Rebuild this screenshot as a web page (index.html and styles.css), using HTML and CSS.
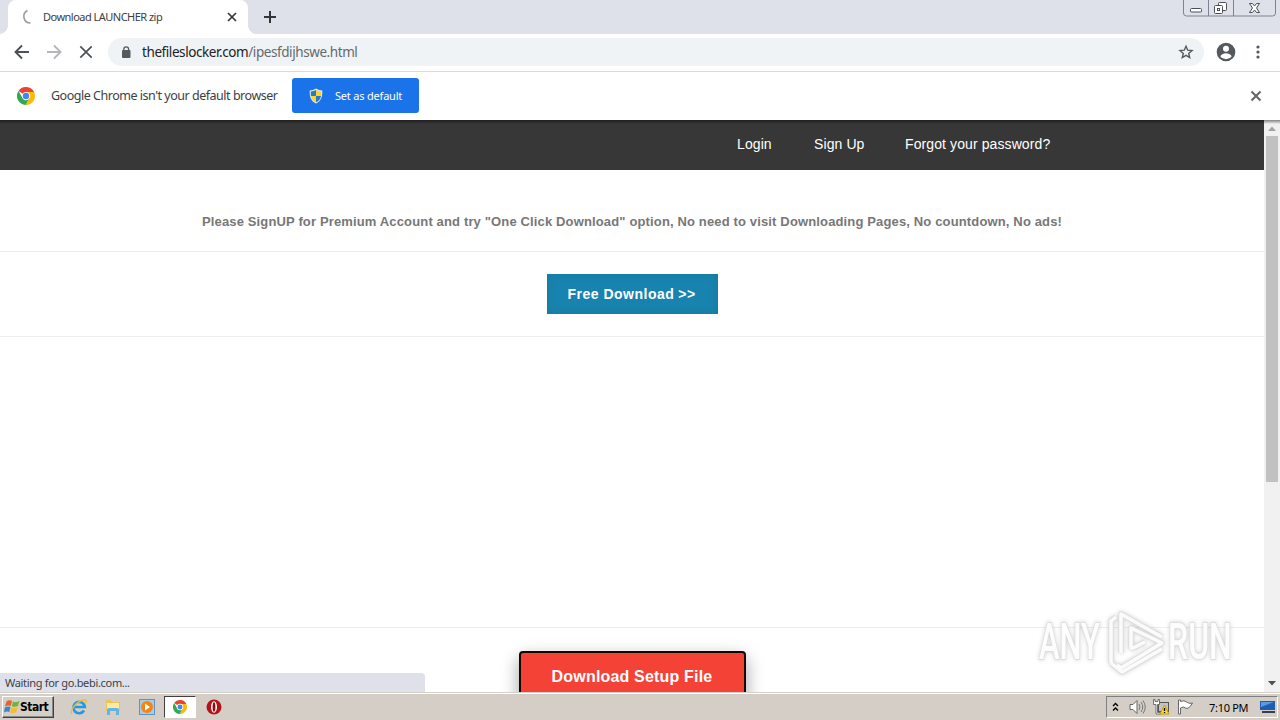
FILE: index.html
```html
<!DOCTYPE html>
<html lang="en">
<head>
  <meta charset="UTF-8" />
  <title>Download LAUNCHER zip</title>
  <link rel="stylesheet" href="styles.css">
</head>
<body>
  <svg width="0" height="0" class="defs">
    <symbol id="chrome" viewBox="0 0 48 48">
      <path fill="#ea4335" d="M24 24 4.1 10.6A24 24 0 0 1 45.6 13.5H24z"/>
      <path fill="#fbbc05" d="M24 13.5h21.6A24 24 0 0 1 23 48L33.2 29.2z"/>
      <path fill="#34a853" d="M4.1 10.6A24 24 0 0 0 23 48L33.2 29.2 24 34 14.8 29.2z"/>
      <circle cx="24" cy="24" r="11" fill="#fff"/>
      <circle cx="24" cy="24" r="8.5" fill="#4285f4"/>
    </symbol>
  </svg>

  <div class="tabstrip">
    <div class="tab">
      <svg class="spinner" width="16" height="16" viewBox="0 0 16 16"><path d="M8.500 1.500A6.600 6.600 0 0 0 11.500 14" fill="none" stroke="#9b9b9b" stroke-width="1.600"/></svg>
      <span class="tab-title">Download LAUNCHER zip</span>
      <svg class="tab-close" width="10" height="10" viewBox="0 0 10 10"><path d="M1 1l8 8M9 1L1 9" stroke="#333639" stroke-width="1.700"/></svg>
    </div>
    <svg class="new-tab" width="12" height="12" viewBox="0 0 12 12"><path d="M6 0v12M0 6h12" stroke="#333639" stroke-width="2"/></svg>
    <svg class="win-buttons" width="94" height="18" viewBox="0 0 94 18">
      <path d="M.5 0v13q0 3 3 3h86q3 0 3-3V0M25.500 0v16M50.500 0v16" fill="none" stroke="#7c8492"/>
      <g fill="#fff" stroke="#4a4f59">
        <rect x="7.500" y="8.500" width="11" height="3.500" rx="1"/>
        <rect x="35.500" y="2.500" width="8" height="8" rx="1"/>
        <rect x="31.500" y="5.500" width="8" height="8" rx="1"/>
        <rect x="34.500" y="8.500" width="2" height="2"/>
        <path d="M66.500 3.500h3l2 2.500 2-2.500h3L73.500 8l3 4.500h-3l-2-2.500-2 2.500h-3l3-4.500z"/>
      </g>
    </svg>
  </div>

  <div class="toolbar">
    <svg class="nav" width="16" height="16" viewBox="0 0 16 16"><path d="M15 8H2M8 1.500L1.500 8 8 14.500" fill="none" stroke="#4d5156" stroke-width="1.900"/></svg>
    <svg class="nav" width="16" height="16" viewBox="0 0 16 16"><path d="M1 8h13M8 1.500L14.500 8 8 14.500" fill="none" stroke="#b4b6b9" stroke-width="1.900"/></svg>
    <svg class="nav" width="16" height="16" viewBox="0 0 16 16"><path d="M2.300 2.300l11.400 11.400M13.700 2.300L2.300 13.700" stroke="#4d5156" stroke-width="1.700"/></svg>
    <div class="omnibox">
      <svg width="10" height="12" viewBox="0 0 10 12"><rect x="1" y="4" width="8.500" height="8" rx="1" fill="#55595e"/><path d="M2.800 5V3.200a2.400 2.400 0 0 1 4.800 0V5" fill="none" stroke="#55595e" stroke-width="1.300"/></svg>
      <span class="url"><span class="host">thefileslocker.com</span><span class="path">/ipesfdijhswe.html</span></span>
      <svg class="star" width="16" height="16" viewBox="0 0 16 16"><path d="M8 2.200l1.700 4 4.300.4-3.300 2.800 1 4.200L8 11.400l-3.700 2.200 1-4.200L2 6.600l4.300-.4z" fill="none" stroke="#55595e" stroke-width="1.400"/></svg>
    </div>
    <svg class="avatar" width="20" height="20" viewBox="0 0 20 20"><circle cx="10" cy="10" r="9.300" fill="#55595e"/><circle cx="10" cy="6.700" r="3" fill="#fff"/><path d="M4.300 14.200c1-2 3.500-3 5.700-3s4.700 1 5.700 3a7 7 0 0 1-11.400 0z" fill="#fff"/></svg>
    <svg class="menu" width="4" height="14" viewBox="0 0 4 14" fill="#55595e"><circle cx="2" cy="2" r="1.600"/><circle cx="2" cy="7" r="1.600"/><circle cx="2" cy="12" r="1.600"/></svg>
  </div>

  <div class="infobar">
    <svg width="18" height="18"><use href="#chrome"/></svg>
    <span class="info-text">Google Chrome isn't your default browser</span>
    <div class="default-btn">
      <svg width="14" height="16" viewBox="0 0 14 16">
        <path d="M7 .5c2 1.300 4 1.800 6.300 1.900C13.600 9 12 13 7 15.500 2 13 .4 9 .7 2.400 3 2.300 5 1.800 7 .5z" fill="#dfe6ea"/>
        <path d="M7 2v6H2C1.800 6.500 1.800 5 1.900 3.500 4 3.300 5.500 2.900 7 2z" fill="#2878c8"/>
        <path d="M7 2v6h5c.2-1.500.2-3 .1-4.500C10 3.300 8.500 2.900 7 2z" fill="#fbd52e"/>
        <path d="M7 8H2c.5 3 2 5 5 6.300z" fill="#fbd52e"/>
        <path d="M7 8h5c-.5 3-2 5-5 6.300z" fill="#2878c8"/>
      </svg>
      <span>Set as default</span>
    </div>
    <svg class="info-close" width="12" height="12" viewBox="0 0 12 12"><path d="M1.500 1.500l9 9M10.500 1.500l-9 9" stroke="#616569" stroke-width="2"/></svg>
  </div>

  <div class="viewport">
    <div class="page">
      <div class="topnav">
        <span class="login">Login</span>
        <span class="signup">Sign Up</span>
        <span class="forgot">Forgot your password?</span>
      </div>
      <div class="notice"><span>Please SignUP for Premium Account and try "One Click Download" option, No need to visit Downloading Pages, No countdown, No ads!</span></div>
      <div class="free-row">
        <div class="free-btn">Free Download<span>&gt;&gt;</span></div>
      </div>
      <div class="ad-space"></div>
      <div class="setup-row">
        <div class="setup-btn">Download Setup File</div>
      </div>
    </div>
    <div class="scrollbar">
      <svg width="16" height="16" viewBox="0 0 16 16"><path d="M4 11l4-4.500 4 4.500z" fill="#a3a3a3"/></svg>
      <div class="thumb"></div>
      <svg class="down" width="16" height="16" viewBox="0 0 16 16"><path d="M4 5h8l-4 4.500z" fill="#505050"/></svg>
    </div>
    <div class="status">Waiting for go.bebi.com...</div>
    <svg class="watermark" width="206" height="72" viewBox="0 0 206 72">
      <g class="letters">
        <text transform="translate(5 52) scale(.62 1)">ANY</text>
        <text transform="translate(134 52) scale(.64 1)">RUN</text>
      </g>
      <g fill="none" stroke-linejoin="round">
        <path d="M77 56V14l5-4M87 46V7l41 23M97 42V21l31 15-41 25-4-3M97 42l14-7M77 56l11 9 40-23" stroke="#dedede" stroke-width="5.500"/>
        <path d="M77 56V14l5-4M87 46V7l41 23M97 42V21l31 15-41 25-4-3M97 42l14-7M77 56l11 9 40-23" stroke="#fbfbfb" stroke-width="3.500"/>
      </g>
    </svg>
  </div>

  <div class="taskbar">
    <div class="start">
      <svg width="16" height="16" viewBox="0 0 16 16">
        <path d="M2.500 2.500Q5 .5 8 2L6.800 7Q4 6 1 7.500z" fill="#e8632b"/>
        <path d="M9 2.500Q12 4 15.500 2L14 7Q11 8.500 7.800 7.300z" fill="#72b43b"/>
        <path d="M.8 8.500Q4 7 6.500 8L5.300 13Q3 12 0 13.500z" fill="#3f83ce"/>
        <path d="M7.500 8.500Q10.500 9.500 13.600 8L12.300 13Q9 15 6.200 13.500z" fill="#f4bd29"/>
      </svg>
      <span>Start</span>
    </div>
    <svg class="quick" width="18" height="18" viewBox="0 0 18 18">
      <path d="M14 12.500a5.700 5.700 0 1 1 .8-3.500H5" fill="none" stroke="#2698dd" stroke-width="2.700"/>
      <path d="M2 16C-1 13 6 4 13 2c3-.8 4 .5 3 3" fill="none" stroke="#e8bc43" stroke-width="1.400"/>
    </svg>
    <svg class="quick" width="18" height="18" viewBox="0 0 18 18">
      <path d="M2 2h5l1 2h8v9H2z" fill="#e9c657"/><path d="M3 5h12v6H3z" fill="#fbeba3"/>
      <path d="M3 17v-5q0-2 2-2h8q2 0 2 2v5h-3v-4H6v4z" fill="#65b4df"/>
    </svg>
    <svg class="quick" width="18" height="18" viewBox="0 0 18 18">
      <rect x="1.500" y="1.500" width="15" height="15" fill="#a9cbe6" stroke="#5d94c1"/><circle cx="9" cy="9" r="6" fill="#f38518"/><path d="M7 5.500v7l5-3.500z" fill="#fff"/>
    </svg>
    <div class="active-task"><svg width="14" height="14"><use href="#chrome"/></svg></div>
    <svg class="opera" width="16" height="16" viewBox="0 0 16 16"><circle cx="8" cy="8" r="7.500" fill="#b0141b"/><ellipse cx="8" cy="8" rx="3" ry="5.800" fill="#fff"/><ellipse cx="8" cy="8" rx="1.400" ry="4.800" fill="#8b0c12"/></svg>
    <div class="tray">
      <svg width="7" height="10" viewBox="0 0 7 10"><path d="M1 4l2.500-2.500L6 4M1 8.500L3.500 6 6 8.500" fill="none" stroke="#000" stroke-width="1.400"/></svg>
      <svg class="sound" width="17" height="16" viewBox="0 0 17 16"><path d="M1 5.500h3L8 1.500v13l-4-4H1z" fill="#fff" stroke="#666"/><path d="M10 5q2 3 0 6M12 3q3.500 5 0 10M14 1.500q4.500 6.500 0 13" fill="none" stroke="#777"/></svg>
      <svg class="net" width="17" height="16" viewBox="0 0 17 16"><rect x="5.500" y="3.500" width="10" height="9" fill="#c4c4c4" stroke="#555"/><path d="M.5 .5h1.500v2h3v-2h1.500v5h-2v8h3v1.500H3V5.500H.5z" fill="#fff" stroke="#555" stroke-width=".8"/><path d="M11.500 6l4.500 9H7z" fill="#ffdb27" stroke="#c69c0b"/><path d="M11.500 9v3M11.500 13v1" stroke="#000" stroke-width="1.300"/></svg>
      <svg class="flag" width="17" height="16" viewBox="0 0 17 16"><path d="M1.500 1v14h2V9q3-2 5 0 3 2 7-5-3 1-5-.5Q7 .5 3.500 2.500V1z" fill="#fff" stroke="#666"/></svg>
      <span class="clock">7:10 PM</span>
      <svg width="16" height="14" viewBox="0 0 16 14"><path d="M0 1h15v9H0z" fill="#1f5db4"/><path d="M1 2h13L1 7z" fill="#5a9bdf"/><path d="M2 11h13v2H2z" fill="#333f50"/></svg>
    </div>
  </div>
</body>
</html>
```
FILE: styles.css
```css
* {
  box-sizing: border-box;
}

body {
  margin: 0;
  width: 1280px;
  height: 720px;
  overflow: hidden;
  display: flex;
  flex-direction: column;
  background: #fff;
  font-family: "Noto Sans", sans-serif;
}

svg {
  display: block;
  flex: none;
}

.defs {
  position: absolute;
}

span {
  white-space: nowrap;
}

/* browser window */
.tabstrip {
  height: 34px;
  flex: none;
  display: flex;
  background: #dee1e9;
}

.tab {
  width: 240px;
  margin-left: 8px;
  padding: 0 11px;
  display: flex;
  align-items: center;
  background: #fff;
  border-radius: 8px 8px 0 0;
  position: relative;
}

.tab::before,
.tab::after {
  content: "";
  position: absolute;
  bottom: 0;
  width: 8px;
  height: 8px;
}

.tab::before {
  left: -8px;
  background: radial-gradient(circle at 0 0, #dee1e9 7.5px, #fff 8px);
}

.tab::after {
  right: -8px;
  background: radial-gradient(circle at 100% 0, #dee1e9 7.5px, #fff 8px);
}

.tab-title {
  margin-left: 8px;
  padding-bottom: 1px;
  font-size: 11px;
  letter-spacing: -0.52px;
  color: #3c4043;
}

.tab-close {
  margin-left: auto;
}

.new-tab {
  margin: 11px 0 0 16px;
}

.win-buttons {
  margin-left: auto;
  margin-right: 3px;
}

.toolbar {
  height: 38px;
  flex: none;
  display: flex;
  align-items: center;
  padding: 0 20px 1px 14px;
  border-bottom: 1px solid #d9dadd;
}

.nav {
  margin-right: 16px;
}

.omnibox {
  width: 1096px;
  height: 28px;
  margin-left: -2px;
  display: flex;
  align-items: center;
  padding: 0 10px 0 13px;
  border-radius: 14px;
  background: #f0f3f5;
}

.url {
  margin-left: 11px;
  font-size: 13.5px;
  letter-spacing: -0.42px;
  color: #65696e;
}

.host {
  color: #202124;
}

.star {
  margin-left: auto;
}

.avatar {
  margin-left: 12px;
}

.menu {
  margin-left: auto;
}

.infobar {
  height: 48px;
  flex: none;
  display: flex;
  align-items: center;
  padding: 0 18px 1px 17px;
}

.info-text {
  width: 241px;
  margin-left: 16px;
  font-size: 12.5px;
  letter-spacing: -0.48px;
  color: #3c4043;
}

.default-btn {
  width: 127px;
  height: 35px;
  display: flex;
  align-items: center;
  padding-left: 17px;
  border-radius: 3px;
  background: #1a73e8;
  color: #fff;
  font-size: 11px;
}

.default-btn span {
  margin-left: 12px;
  padding-bottom: 1px;
  letter-spacing: -0.2px;
}

.info-close {
  margin-left: auto;
}

/* web page */
.viewport {
  height: 572px;
  flex: none;
  display: flex;
  position: relative;
  overflow: hidden;
}

.viewport::before {
  content: "";
  position: absolute;
  top: 0;
  left: 0;
  right: 0;
  height: 4px;
  background: linear-gradient(rgba(0, 0, 0, 0.45), rgba(0, 0, 0, 0));
}

.page {
  width: 1264px;
  font-family: Arial, "Liberation Sans", sans-serif;
}

.topnav {
  height: 50px;
  display: flex;
  padding: 15px 0 0 737px;
  background: #373737;
  color: #fff;
  font-size: 14px;
  line-height: 18px;
}

.login {
  width: 77px;
}

.signup {
  width: 91px;
}

.login,
.signup,
.forgot {
  letter-spacing: 0.1px;
}

.notice {
  height: 82px;
  padding-top: 43px;
  border-bottom: 1px solid #eee;
  text-align: center;
  color: #777;
  font-size: 13px;
  font-weight: bold;
  line-height: 17px;
  letter-spacing: 0.145px;
}

.free-row {
  height: 85px;
  padding-top: 22px;
  border-bottom: 1px solid #eee;
}

.free-btn {
  width: 171px;
  height: 40px;
  margin: 0 auto;
  padding-left: 21px;
  background: #1783ae;
  box-shadow: inset 0 0 7px #187899;
  color: #fff;
  font-size: 14px;
  font-weight: bold;
  line-height: 40px;
  letter-spacing: 0.5px;
}

.free-btn span {
  margin-left: 4px;
}

.ad-space {
  height: 291px;
  border-bottom: 1px solid #eee;
}

.setup-row {
  padding-top: 23px;
}

.setup-btn {
  width: 227px;
  height: 52px;
  margin: 0 auto;
  border: 2px solid #150504;
  border-radius: 4px;
  background: #f44336;
  box-shadow: 0 8px 16px rgba(0, 0, 0, 0.2), 0 6px 20px rgba(0, 0, 0, 0.19);
  color: #fff;
  font-size: 16px;
  font-weight: bold;
  line-height: 47px;
  text-align: center;
  letter-spacing: 0.18px;
}

.scrollbar {
  width: 16px;
  display: flex;
  flex-direction: column;
  background: #f1f1f1;
}

.thumb {
  width: 12px;
  height: 346px;
  margin-left: 2px;
  background: #c1c1c1;
}

.down {
  margin-top: auto;
}

.status {
  position: absolute;
  left: 0;
  bottom: 0;
  width: 425px;
  height: 19px;
  padding-left: 5px;
  border-radius: 0 4px 0 0;
  background: #dee1e9;
  color: #3c4043;
  font-size: 11px;
  line-height: 20px;
  letter-spacing: -0.32px;
}

.watermark {
  position: absolute;
  left: 1034px;
  top: 487px;
  filter: drop-shadow(0 0 2px rgba(0, 0, 0, 0.18));
}

.letters {
  fill: #fdfdfd;
  stroke: #dedede;
  stroke-width: 2px;
  paint-order: stroke;
  font-family: Roboto, sans-serif;
  font-size: 50px;
  font-weight: 500;
}

/* desktop taskbar */
.taskbar {
  height: 28px;
  flex: none;
  display: flex;
  align-items: center;
  padding: 1px 2px 0;
  border-top: 1px solid #d5d0c8;
  box-shadow: inset 0 1px #fff;
  background: #d5cec6;
}

.start {
  width: 52px;
  height: 22px;
  display: flex;
  align-items: center;
  padding-left: 1px;
  border: 1px solid;
  border-color: #fff #404040 #404040 #fff;
  box-shadow: inset -1px -1px #888;
  color: #000;
  font-family: "DejaVu Sans Condensed", "DejaVu Sans", sans-serif;
  font-size: 12px;
  font-weight: bold;
  letter-spacing: -0.5px;
}

.quick {
  margin-left: 16px;
}

.active-task {
  width: 32px;
  height: 22px;
  margin-left: 8px;
  display: flex;
  align-items: center;
  justify-content: center;
  border: 1px solid;
  border-color: #404040 #fff #fff #404040;
  background: #fff;
}

.opera {
  margin-left: 10px;
}

.tray {
  width: 172px;
  height: 22px;
  margin-left: auto;
  display: flex;
  align-items: center;
  padding: 0 1px 0 5px;
  border: 1px solid;
  border-color: #808080 #fff #fff #808080;
}

.sound {
  margin-left: 10px;
}

.net {
  margin-left: 7px;
}

.flag {
  margin-left: 7px;
}

.clock {
  width: 52px;
  margin-left: 15px;
  font-size: 11px;
  letter-spacing: -0.3px;
  color: #000;
}
```
